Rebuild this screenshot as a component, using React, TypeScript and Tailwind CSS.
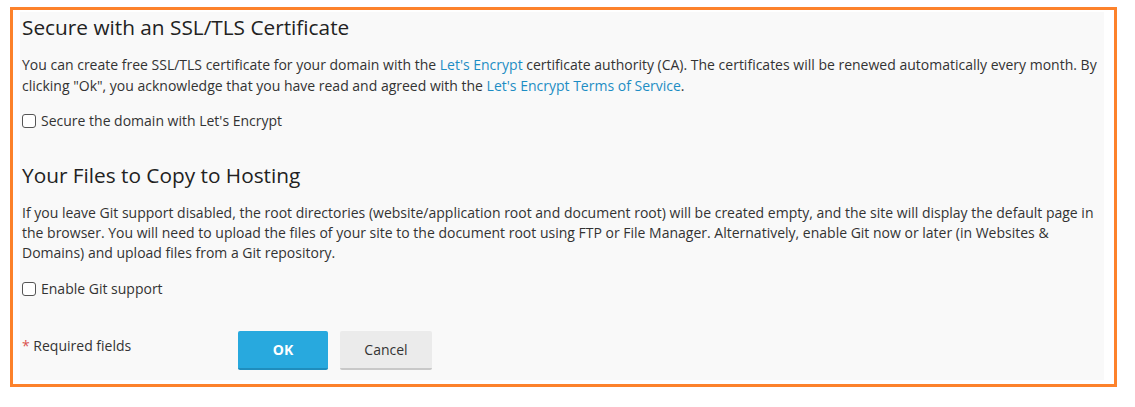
import React from "react";

function Checkbox({ label }: { label: string }) {
  return (
    <label className="flex items-center gap-[5px] text-[14px] text-[#333] leading-5">
      <span className="w-[14px] h-[14px] rounded-[3px] border border-[#555] bg-white shrink-0" />
      <span>{label}</span>
    </label>
  );
}

export default function App() {
  return (
    <div className="w-[1135px] h-[407px] bg-white pt-[7px] pl-[10px]" style={{ fontFamily: '"Open Sans", "Noto Sans", sans-serif' }}>
      <div className="w-[1107px] h-[380px] border-[3px] border-[#fd822b] pl-[7px] pt-[2px]">
        <div className="w-[1084px] h-[368px] bg-[#f9f9f9] pl-[2px] pr-[4px]">
          <h2 className="text-[20.8px] leading-[28px] text-[#222] pt-[1px]">Secure with an SSL/TLS Certificate</h2>
          <p className="mt-[13px] text-[14px] leading-[21px] text-[#333]">
            You can create free SSL/TLS certificate for your domain with the{" "}
            <span className="text-[#1d8dc4]">Let's Encrypt</span> certificate authority (CA). The certificates will be renewed automatically every month. By clicking "Ok", you acknowledge that you have read and agreed with the{" "}
            <span className="text-[#1d8dc4]">Let's Encrypt Terms of Service</span>.
          </p>
          <div className="mt-[15px]">
            <Checkbox label="Secure the domain with Let's Encrypt" />
          </div>
          <h2 className="mt-[30px] text-[20.8px] leading-[28px] text-[#222]">Your Files to Copy to Hosting</h2>
          <p className="mt-[14px] text-[14px] leading-[20px] text-[#333]">
            If you leave Git support disabled, the root directories (website/application root and document root) will be created empty, and the site will display the default page in the browser. You will need to upload the files of your site to the document root using FTP or File Manager. Alternatively, enable Git now or later (in Websites &amp; Domains) and upload files from a Git repository.
          </p>
          <div className="mt-[16px]">
            <Checkbox label="Enable Git support" />
          </div>
          <div className="mt-[32px] flex items-start">
            <div className="w-[216px] pt-[5px] text-[14px] leading-5 text-[#333]">
              <span className="text-[#d9534f]">*</span> Required fields
            </div>
            <button className="w-[90px] h-[39px] bg-[#28a9de] border-b-2 border-[#1f8dbd] rounded-[2px] text-white font-bold text-[14px]">OK</button>
            <button className="ml-[12px] w-[92px] h-[39px] bg-[#ebebeb] border-b-2 border-[#c8c8c8] rounded-[2px] text-[#333] text-[14px]">Cancel</button>
          </div>
        </div>
      </div>
    </div>
  );
}
